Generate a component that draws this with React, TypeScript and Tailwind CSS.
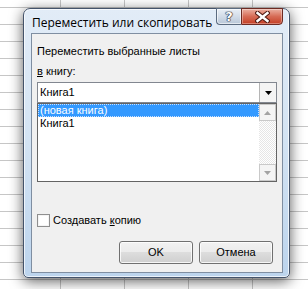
import React from "react";

/* Excel "Переместить или скопировать" dialog over the sheet grid (Vista look). */

const ui = "font-['Liberation_Sans',Arial,sans-serif]";

function CaptionButtons() {
  return (
    <div className="-mt-[1px] ml-auto flex h-[17px]">
      <div className="flex w-[25px] items-center justify-center rounded-bl-[4px] border border-r-0 border-[#5b6b80] bg-gradient-to-b from-[#e9eff6] via-[#d2dce8] to-[#b8c7d8] shadow-[inset_0_0_0_1px_rgba(255,255,255,0.6)]">
        <span className="font-['DejaVu_Sans',sans-serif] text-[13px] font-bold leading-none text-white [text-shadow:0_0_1px_#223,0_0_1px_#223,0_0_1px_#223,0_0_1px_#223]">
          ?
        </span>
      </div>
      <div className="flex w-[42px] items-center justify-center rounded-br-[4px] border border-[#6d2a22] bg-gradient-to-b from-[#eab0a2] via-[#d66b55] to-[#c43c22] shadow-[inset_0_0_0_1px_rgba(255,255,255,0.35)]">
        <svg width="15" height="12" viewBox="0 0 15 12">
          <path
            d="M2.5 2 L12.5 10 M12.5 2 L2.5 10"
            stroke="#4e1a13"
            strokeWidth="4.5"
            strokeLinecap="square"
          />
          <path
            d="M2.5 2 L12.5 10 M12.5 2 L2.5 10"
            stroke="#ffffff"
            strokeWidth="2.4"
            strokeLinecap="square"
          />
        </svg>
      </div>
    </div>
  );
}

function Arrow({ dir, color }: { dir: "up" | "down"; color: string }) {
  return (
    <svg width="7" height="4" viewBox="0 0 7 4">
      <path d={dir === "down" ? "M0 0 H7 L3.5 4 Z" : "M0 4 H7 L3.5 0 Z"} fill={color} />
    </svg>
  );
}

function Button({ children }: { children: React.ReactNode }) {
  return (
    <button
      type="button"
      className="flex h-[23px] w-[74px] items-center justify-center rounded-[3px] border border-[#707070] bg-[linear-gradient(#f2f2f2_0%,#ebebeb_50%,#dddddd_50%,#cfcfcf_100%)] text-[11px] text-black shadow-[inset_0_0_0_1px_rgba(255,255,255,0.8)]"
    >
      {children}
    </button>
  );
}

export default function App() {
  return (
    <div
      className={`${ui} h-[289px] w-[308px] overflow-hidden bg-white pl-[23px] pt-[8px] [background-image:linear-gradient(#c6c6c6_1px,transparent_1px),linear-gradient(90deg,#c6c6c6_1px,transparent_1px)] [background-position:60px_7px] [background-size:64px_17px]`}
    >
      <div className="flex h-[270px] w-[267px] flex-col rounded-b-[5px] rounded-t-[7px] border border-[#44536a] bg-gradient-to-b from-[#e2ecf7] via-[#d3e3f3] to-[#bcd4ed] pb-[4px] pl-[7px] pr-[6px] shadow-[0_3px_14px_rgba(0,0,0,0.65),inset_0_0_0_1px_rgba(255,255,255,0.7)]">
        {/* title bar */}
        <div className="flex h-[24px] items-start">
          <span className="ml-[1px] mt-[6px] font-['Open_Sans',sans-serif] text-[12px] leading-[16px] text-black">
            Переместить или скопировать
          </span>
          <CaptionButtons />
        </div>

        {/* client area */}
        <div className="flex h-[240px] flex-col border border-[#7f8ea1] bg-[#f0f0f0] px-[5px]">
          <div className="mt-[11px] h-[13px] text-[11px] leading-[13px]">Переместить выбранные листы</div>
          <div className="mt-[7px] h-[13px] text-[11px] leading-[13px]">
            <span className="underline">в</span> книгу:
          </div>

          {/* combo box */}
          <div className="mt-[4px] flex h-[21px] border border-[#828790] bg-white">
            <div className="flex flex-1 items-center pl-[2px] text-[11px]">Книга1</div>
            <div className="flex w-[17px] items-center justify-center border-l border-[#b5b5b5] bg-[#f4f4f4]">
              <Arrow dir="down" color="#000" />
            </div>
          </div>

          {/* dropped list */}
          <div className="flex h-[79px] border border-[#646464] bg-white">
            <div className="flex flex-1 flex-col text-[11px] leading-[13px]">
              <div className="h-[13px] border border-dotted border-[#c8e0ff] bg-[#3399ff] pl-[1px] leading-[11px] text-white">
                (новая книга)
              </div>
              <div className="h-[13px] pl-[2px]">Книга1</div>
            </div>
            <div className="flex w-[17px] flex-col [background:repeating-conic-gradient(#e6e6e6_0%_25%,#ffffff_0%_50%)_0_0/2px_2px]">
              <div className="flex h-[17px] items-center justify-center border border-[#c9c9c9] bg-[#f4f4f4]">
                <Arrow dir="up" color="#a3a3a3" />
              </div>
              <div className="flex-1" />
              <div className="flex h-[17px] items-center justify-center border border-[#c9c9c9] bg-[#f4f4f4]">
                <Arrow dir="down" color="#a3a3a3" />
              </div>
            </div>
          </div>

          {/* checkbox */}
          <div className="mt-[32px] flex h-[13px] items-center gap-[3px] text-[11px]">
            <div className="h-[13px] w-[13px] border border-[#8f8f8f] bg-white shadow-[inset_0_0_0_1px_#f4f4f4]" />
            <span>
              Создавать <span className="underline">к</span>опию
            </span>
          </div>

          {/* buttons */}
          <div className="mt-[14px] flex justify-end gap-[6px] pr-[4px]">
            <Button>OK</Button>
            <Button>Отмена</Button>
          </div>
        </div>
      </div>
    </div>
  );
}
